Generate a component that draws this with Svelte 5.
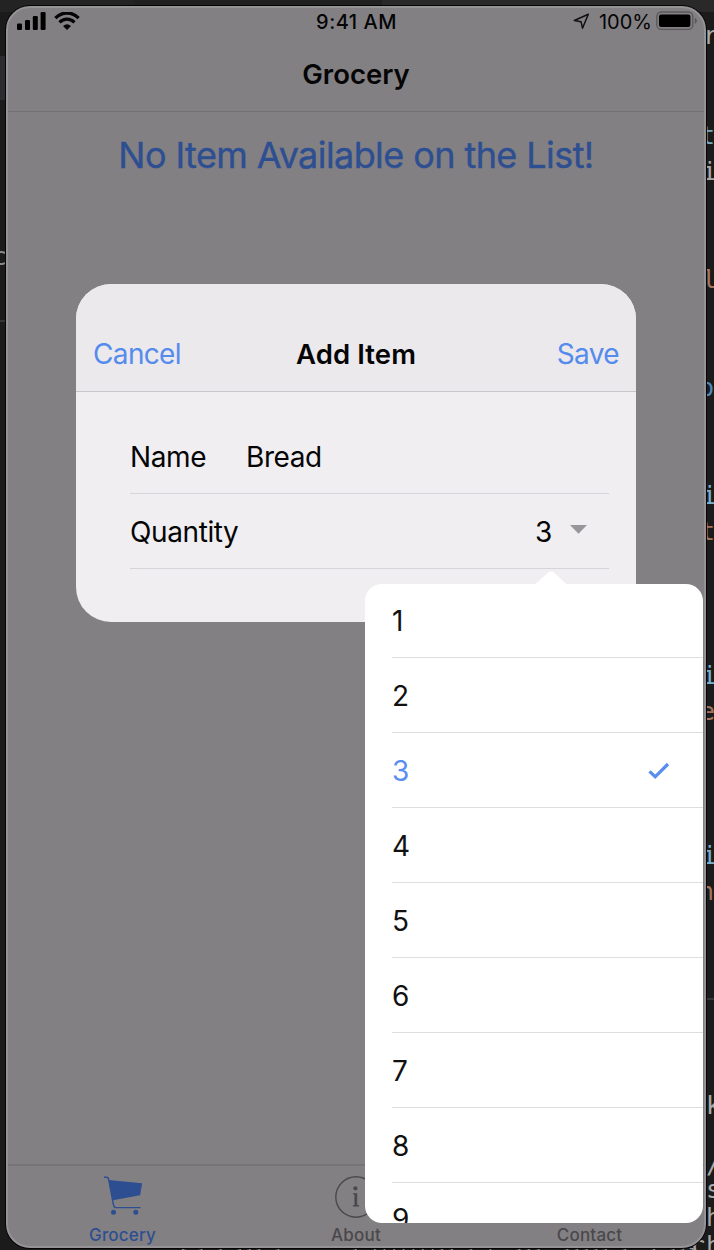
<script>
  const quantities = [1, 2, 3, 4, 5, 6, 7, 8, 9];
  let selected = $state(3);

  const fragments = [
    { text: 'r', x: 703, y: 20, color: '#aaa' },
    { text: 't', x: 700, y: 120, color: '#78a8c4' },
    { text: 'i', x: 702, y: 156, color: '#aaa' },
    { text: 'l', x: 702, y: 264, color: '#a5755f' },
    { text: 'p', x: 699, y: 372, color: '#4f88bb' },
    { text: 'i', x: 702, y: 480, color: '#78b0d0' },
    { text: 't', x: 700, y: 516, color: '#a5755f' },
    { text: 'i', x: 702, y: 660, color: '#78b0d0' },
    { text: 'e', x: 700, y: 696, color: '#a5755f' },
    { text: 'i', x: 702, y: 840, color: '#78b0d0' },
    { text: 'n', x: 699, y: 876, color: '#a5755f' },
    { text: 'k', x: 706, y: 1090, color: '#aaa' },
    { text: '/', x: 706, y: 1149, color: '#aaa' },
    { text: 's', x: 706, y: 1174, color: '#aaa' },
    { text: 'h', x: 706, y: 1202, color: '#aaa' },
    { text: 'ch', x: 691, y: 1230, color: '#aaa' },
    { text: 'c', x: -8, y: 241, color: '#888' }
  ];
</script>

<div class="desktop">
  <div class="toolbar"></div>
  <div class="side"></div>
  <div class="rule left"></div>
  <div class="rule right"></div>
  {#each fragments as f}
    <span class="code" style="left:{f.x}px;top:{f.y}px;color:{f.color}">{f.text}</span>
  {/each}
  <span class="code bottom">f l l lll l&nbsp;&nbsp;&nbsp;&nbsp;&nbsp;&nbsp; l tttttttll l t&nbsp;&nbsp;lll&nbsp;&nbsp;lllll l&nbsp;&nbsp;l lll</span>

  <div class="phone">
    <div class="status">
      <div class="signal">
        <svg width="30" height="20" viewBox="0 0 30 20">
          <rect x="0" y="11.5" width="5" height="6.5" rx="1.2" />
          <rect x="8" y="8" width="5" height="10" rx="1.2" />
          <rect x="15.8" y="4" width="5" height="14" rx="1.2" />
          <rect x="23.6" y="0" width="5" height="18" rx="1.2" />
        </svg>
        <svg width="26" height="20" viewBox="0 0 26 20" fill="none" stroke="#050505">
          <path d="M1.4 6.2C7.8 -0.7 18.2 -0.7 24.6 6.2" stroke-width="3.4" />
          <path d="M5.5 10.4C9.8 6.1 16.2 6.1 20.5 10.4" stroke-width="3.2" />
          <path d="M9 13.9Q13 10.8 17 13.9L13 18Z" fill="#050505" stroke="none" />
        </svg>
      </div>
      <div class="time">9:41 AM</div>
      <div class="power">
        <svg width="17" height="17" viewBox="0 0 17 17" fill="none" stroke="#111" stroke-width="1.5" stroke-linejoin="round">
          <path d="M15.3 1.2L1.3 7.5L8 8.7L9.5 15.2Z" />
        </svg>
        <span>100%</span>
        <svg class="battery" width="42" height="20" viewBox="0 0 42 20">
          <rect x=".8" y="1" width="36" height="17.4" rx="4.5" fill="none" stroke="#5a585a" stroke-width="1.3" />
          <rect x="3" y="3.4" width="31.4" height="12.6" rx="2" />
          <path d="M38.8 6.4Q43.2 9.7 38.8 13Z" fill="#5a585a" />
        </svg>
      </div>
    </div>
    <header class="title">Grocery</header>
    <main class="content"><h1>No Item Available on the List!</h1></main>
    <nav class="tabs">
      <div class="tab active">
        <svg width="40" height="40" viewBox="0 0 40 40" fill="none" stroke="#2d4f91" stroke-width="1.4">
          <path d="M1 1.3H3.6Q5.3 1.3 5.8 4L10.4 28.5Q11 31.6 13 31.6H37.5" />
          <path d="M5.6 4L39.1 7.2L37.2 19.3L9.8 24.2Z" fill="#2d4f91" stroke="none" />
          <circle cx="10.5" cy="36.3" r="2.5" fill="#2d4f91" stroke="none" />
          <circle cx="32.8" cy="36.3" r="2.5" fill="#2d4f91" stroke="none" />
        </svg>
        <span>Grocery</span>
      </div>
      <div class="tab">
        <svg width="42" height="42" viewBox="0 0 42 42" fill="none" stroke="#4a484b" stroke-width="1.4">
          <circle cx="21" cy="21" r="20.2" />
          <circle cx="20.4" cy="12.3" r="2.1" fill="#4a484b" stroke="none" />
          <path d="M18.3 17.5H21.9V29.2L24 29.5V30.2H18.2V29.5L19.8 29.2V18.4L18.3 18Z" fill="#4a484b" stroke="#4a484b" stroke-width=".6" />
        </svg>
        <span>About</span>
      </div>
      <div class="tab"><span>Contact</span></div>
    </nav>
  </div>

  <section class="dialog">
    <div class="dialog-head">
      <span class="link cancel">Cancel</span>
      <strong>Add Item</strong>
      <span class="link save">Save</span>
    </div>
    <div class="form">
      <div class="row"><span class="label name">Name</span><span class="bread">Bread</span></div>
      <div class="row">
        <span class="label quantity">Quantity</span>
        <span class="value">{selected}</span>
        <svg width="17" height="9" viewBox="0 0 17 9"><path d="M0 0H17L8.5 8.8Z" fill="#98969a" /></svg>
      </div>
    </div>
  </section>

  <div class="popover">
    <svg class="arrow" width="36" height="16" viewBox="0 0 36 16"><path d="M0 16C4 14.5 5 12.5 14.3 4Q18 .4 21.7 4C31 12.5 32 14.5 36 16Z" fill="#fff" /></svg>
    <div class="options">
      {#each quantities as q}
        <button class="option" class:chosen={q === selected} onclick={() => (selected = q)}>
          <span>{q}</span>
          {#if q === selected}
            <svg width="22" height="18" viewBox="0 0 22 18" fill="none" stroke="#5a8df0" stroke-width="3.3"><path d="M1.5 9.4L7.2 14.8L20 2" /></svg>
          {/if}
        </button>
      {/each}
    </div>
  </div>
</div>

<style>
  :global(body) { background: #1c1c1c; }
  .desktop { position: relative; width: 714px; height: 1250px; overflow: hidden; background: #1b1b1b; font-family: Inter, "Liberation Sans", sans-serif; color: #050506; font-size: 28px; letter-spacing: -0.4px; }
  .toolbar { position: absolute; left: 0; top: 0; width: 714px; height: 12px; background: linear-gradient(90deg, #232323 134px, #202020 134px 382px, #292929 382px); }
  .side { position: absolute; left: 0; top: 56px; width: 6px; height: 44px; background: #2b2b30; }
  .rule { position: absolute; height: 2px; background: #363636; }
  .rule.left { left: 0; top: 320px; width: 6px; }
  .rule.right { left: 706px; top: 998px; width: 8px; }
  .code { position: absolute; font: 25px/32px "DejaVu Sans Mono", monospace; letter-spacing: 0; white-space: pre; }
  .code.bottom { left: 178px; top: 1239px; color: #999; font-size: 16px; }
  .phone { position: absolute; left: 6px; top: 6px; width: 700px; height: 1242px; box-sizing: border-box; border: 2px solid #969397; border-radius: 24px; background: #838083; box-shadow: 0 0 0 1px #050505; display: flex; flex-direction: column; overflow: hidden; }
  .status { display: grid; grid-template-columns: 1fr auto 1fr; align-items: center; height: 28px; padding: 0 6px 0 9px; font-size: 20px; line-height: 28px; letter-spacing: 0; }
  .signal, .power { display: flex; align-items: center; }
  .signal { gap: 7px; }
  .signal svg { display: block; }
  .time { font-weight: 500; letter-spacing: .5px; padding-right: 2px; margin-top: -1px; }
  .power { justify-content: flex-end; margin-top: -1px; }
  .power span { margin: 0 4px 0 9px; }
  .power .battery { margin-top: -2px; }
  .title { height: 76px; line-height: 76px; box-sizing: border-box; border-bottom: 1px solid #747174; text-align: center; font-size: 27.5px; font-weight: 600; letter-spacing: 0; }
  .content { flex: 1; }
  h1 { margin: 21px 0 0; font-size: 36px; line-height: 44px; font-weight: 400; text-align: center; color: #2d4f91; letter-spacing: -0.58px; -webkit-text-stroke: .4px #2d4f91; }
  .tabs { height: 82px; box-sizing: border-box; border-top: 2px solid #777477; display: grid; grid-template-columns: 229px 238px 1fr; color: #4a484b; }
  .tab { display: flex; flex-direction: column; align-items: center; justify-content: flex-end; font-size: 17px; font-weight: 500; line-height: 22px; }
  .active { color: #2d4f91; }
  .active svg { margin-bottom: 8px; }
  .tab:nth-child(2) svg { margin-bottom: 6px; }
  .tab span { letter-spacing: .2px; }
  .dialog { position: absolute; left: 76px; top: 284px; width: 560px; height: 338px; border-radius: 35px; overflow: hidden; background: #f0eef1; }
  .dialog-head { height: 108px; box-sizing: border-box; padding: 33px 17px 0; border-bottom: 1px solid #c8c6ca; background: #ebe9ec; display: grid; grid-template-columns: 1fr auto 1fr; align-items: center; }
  .link { color: #548bed; letter-spacing: -0.65px; }
  .save { text-align: right; }
  strong { font-weight: 600; font-size: 27.5px; letter-spacing: 0.1px; }
  .form { padding: 27px 27px 0 54px; }
  .row { height: 75px; box-sizing: border-box; padding-top: 2px; border-bottom: 1px solid #d6d4d8; display: flex; align-items: center; }
  .name { width: 116px; }
  .quantity { flex: 1; }
  .row svg { margin: 0 22px 6px 18px; }
  .popover { position: absolute; left: 365px; top: 584px; width: 338px; height: 639px; }
  .arrow { position: absolute; left: 168px; top: -15px; }
  .options { height: 639px; overflow: hidden; border-radius: 17px; background: #fff; }
  .option { display: flex; align-items: center; justify-content: space-between; box-sizing: border-box; width: 311px; height: 75px; margin: 0 0 0 27px; padding: 2px 33px 0 0; border: 0; border-bottom: 1px solid #dedede; background: none; color: #111; font: inherit; }
  .option:first-child { height: 74px; padding-top: 1px; }
  .option:last-child { padding-top: 0; height: 73px; }
  .option.chosen { color: #5a8df0; }
</style>
